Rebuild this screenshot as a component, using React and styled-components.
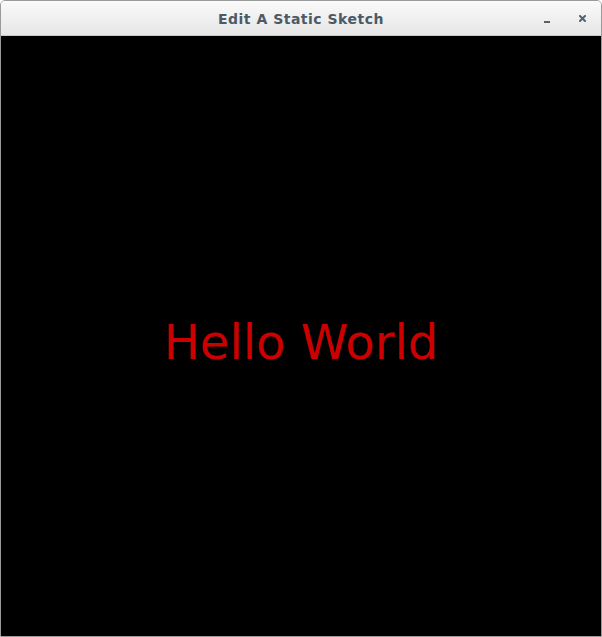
import styled, { createGlobalStyle } from 'styled-components'

const GlobalStyle = createGlobalStyle`
  html, body {
    margin: 0;
    padding: 0;
    background: #ffffff;
  }
`

const Window = styled.div`
  width: 602px;
  height: 637px;
  box-sizing: border-box;
  display: flex;
  flex-direction: column;
  border: 1px solid #9a9a9a;
  border-radius: 5px 5px 0 0;
  overflow: hidden;
`

const TitleBar = styled.div`
  height: 34px;
  flex-shrink: 0;
  display: flex;
  align-items: center;
  justify-content: center;
  position: relative;
  background: linear-gradient(#fafafa, #e6e6e6);
  border-bottom: 1px solid #c8c8c8;
`

const Title = styled.span`
  font-family: 'DejaVu Sans', sans-serif;
  font-weight: bold;
  font-size: 14px;
  letter-spacing: 0.5px;
  color: #4c5a66;
  padding-top: 1px;
`

const Controls = styled.div`
  position: absolute;
  right: 15px;
  top: 0;
  bottom: 0;
  display: flex;
  align-items: center;
  gap: 28px;
`

const ControlIcon = styled.svg`
  display: block;
  width: 7px;
  height: 7px;
  margin-top: ${(p) => p.$offset || 0}px;
`

const Canvas = styled.div`
  flex: 1;
  background: #000000;
  display: flex;
  align-items: center;
  justify-content: center;
`

const Greeting = styled.span`
  font-family: 'DejaVu Sans', sans-serif;
  font-size: 48px;
  color: #cc0000;
  padding-top: 12px;
`

export default function App() {
  return (
    <>
      <GlobalStyle />
      <Window>
        <TitleBar>
          <Title>Edit A Static Sketch</Title>
          <Controls>
            <ControlIcon viewBox="0 0 7 7" $offset={5}>
              <rect x="0" y="4" width="6" height="2" fill="#56636d" />
            </ControlIcon>
            <ControlIcon viewBox="0 0 7 7">
              <path d="M1 1 L6 6 M6 1 L1 6" stroke="#56636d" strokeWidth="2" strokeLinecap="square" />
            </ControlIcon>
          </Controls>
        </TitleBar>
        <Canvas>
          <Greeting>Hello World</Greeting>
        </Canvas>
      </Window>
    </>
  )
}
